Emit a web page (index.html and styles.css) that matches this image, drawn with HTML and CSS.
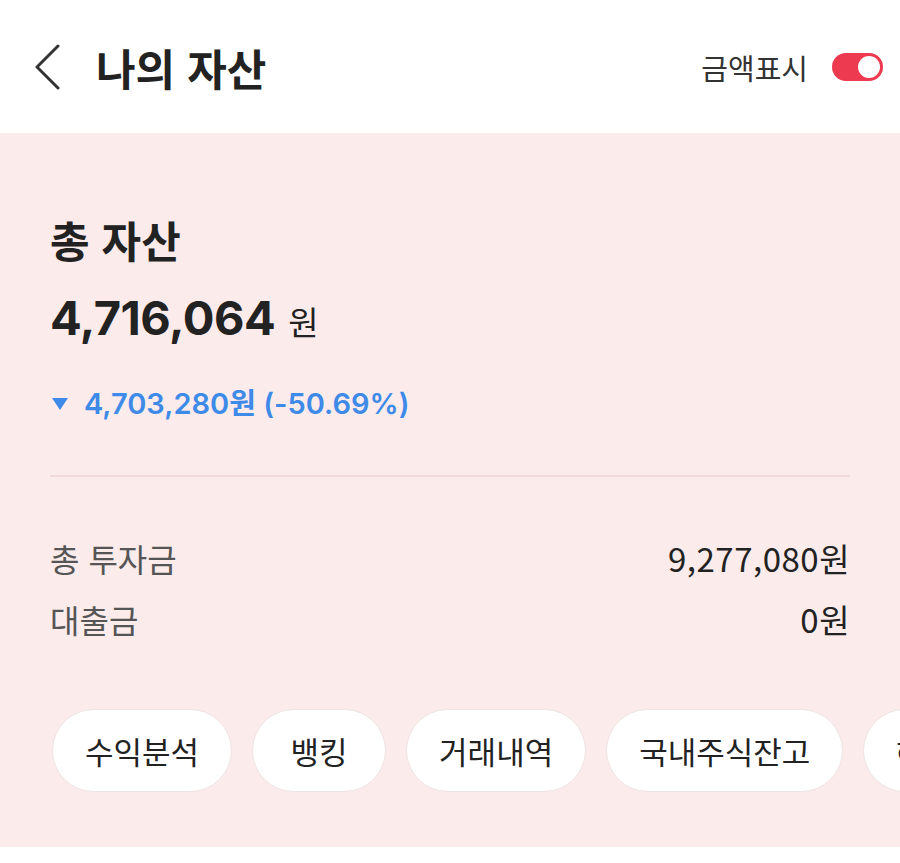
FILE: index.html
```html
<!DOCTYPE html>
<html lang="ko">
<head>
<meta charset="UTF-8">
<title>나의 자산</title>
<link rel="stylesheet" href="styles.css">
</head>
<body>
<header class="top">
    <svg class="back" width="26" height="46" viewBox="0 0 26 46">
        <polyline points="23,2 2,23 23,44" fill="none" stroke="#333" stroke-width="3" stroke-linecap="round" stroke-linejoin="round"/>
    </svg>
    <h1 class="title">나의 자산</h1>
    <div class="show-amount">
        <span>금액표시</span>
        <div class="toggle on"><div class="knob"></div></div>
    </div>
</header>

<section class="asset">
    <h2 class="asset-title">총 자산</h2>
    <div class="total"><span class="num">4,716,064</span><span class="unit">원</span></div>
    <div class="change">
        <svg class="tri" width="16" height="12" viewBox="0 0 16 12"><polygon points="0,0 16,0 8,12" fill="#3d8ae8"/></svg>
        <span>4,703,280원 (-50.69%)</span>
    </div>
    <hr class="line">
    <div class="rows">
        <div class="row"><span class="label">총 투자금</span><span class="value">9,277,080원</span></div>
        <div class="row"><span class="label">대출금</span><span class="value">0원</span></div>
    </div>
    <div class="chips">
        <div class="chip">수익분석</div>
        <div class="chip chip-short">뱅킹</div>
        <div class="chip">거래내역</div>
        <div class="chip">국내주식잔고</div>
        <div class="chip">해외주식잔고</div>
    </div>
</section>
</body>
</html>
```

FILE: styles.css
```css
body {
margin: 0;
background: #fff;
font-family: "Noto Sans CJK KR", sans-serif;
color: #222;
}

.top {
height: 133px;
display: flex;
align-items: center;
padding: 0 17px 0 35px;
}
.top .back {
flex-shrink: 0;
}
.top .title {
margin: 0 0 0 35px;
font-size: 43px;
font-weight: 700;
color: #222;
flex: 1;
}
.show-amount {
display: flex;
align-items: center;
gap: 24px;
font-size: 29px;
color: #333;
}
.toggle {
width: 51px;
height: 28px;
border-radius: 14px;
background: #ccc;
display: flex;
align-items: center;
padding: 0 3px;
box-sizing: border-box;
}
.toggle.on {
background: #ee3a50;
justify-content: flex-end;
}
.toggle .knob {
width: 22px;
height: 22px;
border-radius: 50%;
background: #fff;
}

.asset {
background: #fcebeb;
padding: 82px 0 55px 50px;
overflow: hidden;
}
.asset-title {
margin: 0;
font-size: 43px;
line-height: 48px;
font-weight: 700;
}
.total {
margin-top: 27px;
line-height: 56px;
}
.total .num {
font-family: "Inter", "Noto Sans CJK KR", sans-serif;
font-size: 47px;
font-weight: 700;
letter-spacing: -0.5px;
}
.total .unit {
font-size: 33px;
margin-left: 13px;
}
.change {
margin-top: 30px;
display: flex;
align-items: center;
line-height: 36px;
font-family: "Inter", "Noto Sans CJK KR", sans-serif;
font-size: 29px;
font-weight: 600;
color: #3d8ae8;
}
.change .tri {
margin: 0 16px 0 2px;
}
.line {
margin: 53px 50px 0 0;
border: none;
border-top: 2px solid #f0dada;
}
.rows {
margin-top: 50px;
padding-right: 50px;
}
.row {
display: flex;
justify-content: space-between;
align-items: center;
height: 61px;
}
.row .label {
font-size: 32px;
color: #555;
}
.row .value {
font-size: 33px;
color: #222;
letter-spacing: 0.5px;
}
.chips {
margin-top: 60px;
margin-left: 2px;
display: flex;
gap: 20px;
white-space: nowrap;
}
.chip {
flex-shrink: 0;
height: 83px;
box-sizing: border-box;
padding: 0 32px;
display: flex;
align-items: center;
justify-content: center;
background: #fff;
border: 1px solid #eee2e2;
border-radius: 42px;
font-size: 31px;
color: #222;
}
.chip-short {
min-width: 134px;
}
```
